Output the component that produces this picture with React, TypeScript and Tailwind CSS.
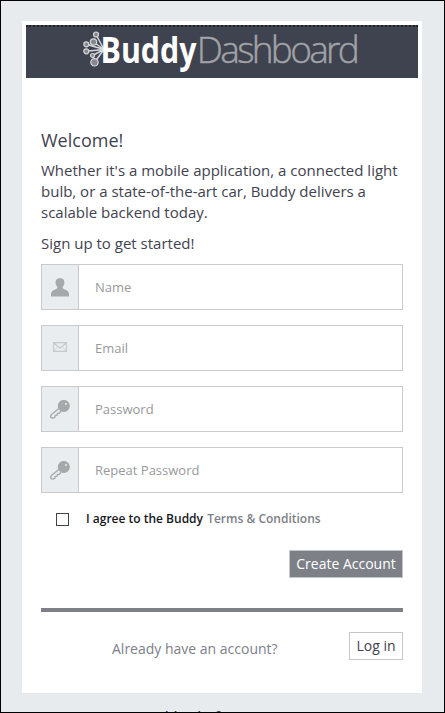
import React from "react";

type IconName = "user" | "mail" | "key";

function Logo() {
  return (
    <svg width="276" height="51" viewBox="0 0 276 51" className="block shrink-0 overflow-visible" aria-label="Buddy Dashboard">
      <g stroke="#d6d7da" strokeWidth="1.2" fill="#85888f">
        <path d="M20 22.500 12 7.500M20 22.500 9.500 15M20 22.500 2.300 17.300M20 22.500 2.300 24.300M20 22.500 8.500 28.500M20 22.500 10.500 35.300" strokeWidth="1.5" />
        <circle cx="12" cy="7.500" r="2.500" />
        <circle cx="9.500" cy="15" r="3.200" />
        <circle cx="2.300" cy="17.300" r="2.500" />
        <circle cx="2.300" cy="24.300" r="2.500" />
        <circle cx="8.500" cy="28.500" r="2" />
        <circle cx="10.500" cy="35.300" r="3.700" />
      </g>
      <text x="16.500" y="36" textLength="96" lengthAdjust="spacingAndGlyphs" fill="#ffffff" fontSize="35" fontWeight="700" fontFamily="'Open Sans', sans-serif">Buddy</text>
      <text x="112.800" y="36" textLength="163" lengthAdjust="spacing" fill="#a1a3a7" stroke="#a1a3a7" strokeWidth=".4" fontSize="37" fontWeight="300" fontFamily="'Open Sans', sans-serif">Dashboard</text>
    </svg>
  );
}

function FieldIcon({ name }: { name: IconName }) {
  if (name === "user") {
    return (
      <svg width="18" height="19" viewBox="0 0 18 19" fill="#a6a8aa">
        <path d="M9 .3c3 0 4.700 2 4.400 4.800-.2 1.800-.8 2.800-1.800 4 0 1 .3 1.700 1.500 2.100 3.100 1 4.900 2.200 4.900 5.100v2.200H0v-2.200c0-2.900 1.800-4.100 4.900-5.100C6.100 10.800 6.400 10.100 6.400 9.100c-1-1.200-1.600-2.200-1.800-4C4.300 2.300 6 .3 9 .3Z" />
      </svg>
    );
  }
  if (name === "mail") {
    return (
      <svg width="14" height="10" viewBox="0 0 14 10" fill="none" stroke="#c5c7c8" strokeWidth="1.1" className="mb-0.5">
        <path d="M.6.600h12.800v8.800H.6ZM1 1l6 5.200L13 1" />
        <path d="M1 9l3-3.500M13 9l-3-3.500" strokeWidth=".6" />
      </svg>
    );
  }
  return (
    <svg width="20" height="19" viewBox="0 0 20 19" fill="none" stroke="#a6a8aa" strokeWidth="1.3">
      <circle cx="13.800" cy="6" r="5.400" fill="#a6a8aa" />
      <circle cx="16" cy="4" r="1" fill="#e8ebee" stroke="none" />
      <path d="M8.800 8.500 1.500 14.500Q.4 16 .8 17.500L2.500 18.200 4.800 17.300 5.200 15.400 7 15.300 7.400 13.500 9.200 13.300 11.200 11" strokeLinejoin="round" />
    </svg>
  );
}

const fields: { label: string; icon: IconName; type: string }[] = [
  { label: "Name", icon: "user", type: "text" },
  { label: "Email", icon: "mail", type: "email" },
  { label: "Password", icon: "key", type: "password" },
  { label: "Repeat Password", icon: "key", type: "password" },
];

export default function App() {
  return (
    <div className="flex h-[713px] w-[445px] flex-col overflow-hidden border border-black bg-[#e8ebee] px-[21px] pt-5 font-['Open_Sans',sans-serif] text-[#3f434f]">
      <main className="flex h-[672px] w-[400px] shrink-0 flex-col bg-white p-1">
        <header className="flex h-[53px] shrink-0 justify-center border-t-2 border-dotted border-[#20232b] bg-[#3f434f]">
          <Logo />
        </header>
        <div className="flex flex-col pl-[15px] pr-[15px] pt-[50px]">
          <h1 className="text-[18px] leading-[25px]">Welcome!</h1>
          <p className="mt-[7px] whitespace-nowrap text-[15px] leading-[21px]">
            Whether it's a mobile application, a connected light<br />
            bulb, or a state-of-the-art car, Buddy delivers a<br />
            scalable backend today.
          </p>
          <p className="mt-[10px] text-[15px] leading-[21px]">Sign up to get started!</p>
          <form className="mt-[10px] flex flex-col gap-[15px]">
            {fields.map((f) => (
              <label key={f.label} className="flex h-[46px] border border-[#c9cacc]">
                <span className="flex w-[37px] shrink-0 items-center justify-center border-r border-[#c9cacc] bg-[#e9edf0]">
                  <FieldIcon name={f.icon} />
                </span>
                <input
                  type={f.type}
                  placeholder={f.label}
                  className="min-w-0 flex-1 px-4 pt-0.5 text-[13px] outline-none placeholder:text-[#98999c]"
                />
              </label>
            ))}
          </form>
          <div className="mt-4 flex h-5 items-center pl-[15px]">
            <input type="checkbox" className="size-[13px] appearance-none border border-[#3f434f] bg-white" />
            <span className="ml-[17px] text-[12px] font-semibold leading-5 text-[#16171e]">
              I agree to the Buddy <a className="ml-px text-[#7d8087]">Terms &amp; Conditions</a>
            </span>
          </div>
          <button className="mt-[21px] h-[28px] w-[114px] self-end whitespace-nowrap border border-[#c5c6c9] bg-[#7d8087] text-[14px] leading-[26px] text-white">
            Create Account
          </button>
          <hr className="mt-[30px] h-1 border-0 bg-[#7d8087]" />
          <div className="mt-5 flex justify-between pl-[71px]">
            <span className="pt-[6px] text-[14px] leading-[22px] text-[#7d8087]">Already have an account?</span>
            <button className="h-[28px] w-[54px] whitespace-nowrap border border-[#c5c6c9] text-[14px] leading-[26px]">Log in</button>
          </div>
        </div>
      </main>
      <footer className="shrink-0 pl-[120px] pt-[14px] text-[14px] font-semibold leading-5">Buddy Platform</footer>
    </div>
  );
}
